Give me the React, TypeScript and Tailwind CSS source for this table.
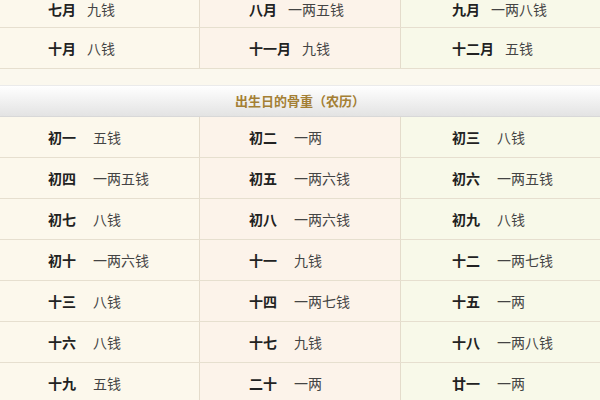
const monthRows: [string, string][][] = [
  [["七月", "九钱"], ["八月", "一两五钱"], ["九月", "一两八钱"]],
  [["十月", "八钱"], ["十一月", "九钱"], ["十二月", "五钱"]],
];

const dayRows: [string, string][][] = [
  [["初一", "五钱"], ["初二", "一两"], ["初三", "八钱"]],
  [["初四", "一两五钱"], ["初五", "一两六钱"], ["初六", "一两五钱"]],
  [["初七", "八钱"], ["初八", "一两六钱"], ["初九", "八钱"]],
  [["初十", "一两六钱"], ["十一", "九钱"], ["十二", "一两七钱"]],
  [["十三", "八钱"], ["十四", "一两七钱"], ["十五", "一两"]],
  [["十六", "八钱"], ["十七", "九钱"], ["十八", "一两八钱"]],
  [["十九", "五钱"], ["二十", "一两"], ["廿一", "一两"]],
];

const Row = ({
  cells,
  gap,
  partial = false,
}: {
  cells: [string, string][];
  gap: string;
  partial?: boolean;
}) => {
  const align = partial ? "items-start pt-px leading-[16px]" : "items-center";
  return (
    <div
      className={`grid grid-cols-[200px_201px_199px] border-b border-[#e6dfcf] ${
        partial ? "h-[28px]" : "h-[41px]"
      }`}
    >
      <div className={`flex pl-[48px] bg-[#fcf8ec] border-r border-[#e4dccb] ${gap} ${align}`}>
        <span className="font-bold text-[#222]">{cells[0][0]}</span>
        <span className="text-[#444]">{cells[0][1]}</span>
      </div>
      <div className={`flex pl-[49px] bg-[#fcf3ea] border-r border-[#e4dccb] ${gap} ${align}`}>
        <span className="font-bold text-[#222]">{cells[1][0]}</span>
        <span className="text-[#444]">{cells[1][1]}</span>
      </div>
      <div className={`flex pl-[51px] bg-[#f8f9e9] ${gap} ${align}`}>
        <span className="font-bold text-[#222]">{cells[2][0]}</span>
        <span className="text-[#444]">{cells[2][1]}</span>
      </div>
    </div>
  );
};

export default function App() {
  return (
    <div
      className="w-[600px] h-[400px] overflow-hidden bg-[#fbf8ee] text-[14px]"
      style={{ fontFamily: '"Noto Sans CJK SC", "Noto Sans", sans-serif' }}
    >
      {/* top of the month table, scrolled partly out of view */}
      <Row cells={monthRows[0]} gap="gap-[11px]" partial />
      <Row cells={monthRows[1]} gap="gap-[11px]" />

      {/* spacer */}
      <div className="h-[17px]" />

      {/* section header */}
      <div className="h-[31px] flex items-center justify-center bg-gradient-to-b from-white to-[#e3e3e3] border-b border-[#d8d8d8] shadow-[0_-1px_0_#ebebeb]">
        <span className="font-bold text-[13px] text-[#a47f34]">出生日的骨重（农历）</span>
      </div>

      <div>
        {dayRows.map((r, i) => (
          <Row key={i} cells={r} gap="gap-[17px]" />
        ))}
      </div>
    </div>
  );
}
